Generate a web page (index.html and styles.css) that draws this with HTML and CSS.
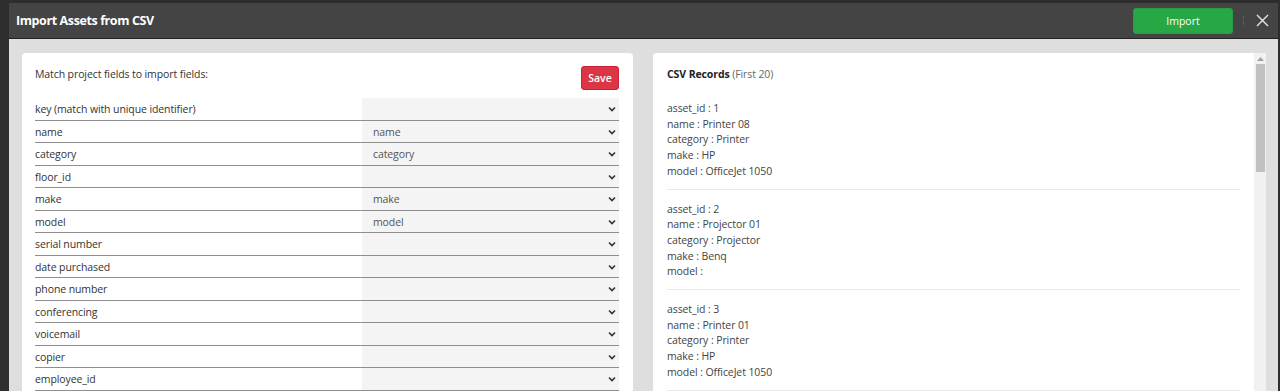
FILE: index.html
```html
<!DOCTYPE html>
<html>
<head>
<meta charset="utf-8">
<link rel="stylesheet" href="styles.css">
</head>
<body>
<div class="frame">
  <div class="modal">
    <header class="topbar">
      <h1 class="title">Import Assets from CSV</h1>
      <div class="actions">
        <button class="btn-import">Import</button>
        <span class="sep"></span>
        <svg class="close" width="13" height="13" viewBox="0 0 13 13"><path d="M1 1L12 12M12 1L1 12" stroke="#e8e8e8" stroke-width="1.4" fill="none"/></svg>
      </div>
    </header>
    <main class="body">
      <section class="card left">
        <div class="card-head">
          <span class="intro">Match project fields to import fields:</span>
          <button class="btn-save">Save</button>
        </div>
        <div class="rows">
          <div class="row"><span class="lbl">key (match with unique identifier)</span><span class="sel"><span></span><svg class="chev" width="8" height="6" viewBox="0 0 8 6"><path d="M1 1.5L4 4.5L7 1.5" stroke="#333" stroke-width="1.6" fill="none"/></svg></span></div>
          <div class="row"><span class="lbl">name</span><span class="sel"><span>name</span><svg class="chev" width="8" height="6" viewBox="0 0 8 6"><path d="M1 1.5L4 4.5L7 1.5" stroke="#333" stroke-width="1.6" fill="none"/></svg></span></div>
          <div class="row"><span class="lbl">category</span><span class="sel"><span>category</span><svg class="chev" width="8" height="6" viewBox="0 0 8 6"><path d="M1 1.5L4 4.5L7 1.5" stroke="#333" stroke-width="1.6" fill="none"/></svg></span></div>
          <div class="row"><span class="lbl">floor_id</span><span class="sel"><span></span><svg class="chev" width="8" height="6" viewBox="0 0 8 6"><path d="M1 1.5L4 4.5L7 1.5" stroke="#333" stroke-width="1.6" fill="none"/></svg></span></div>
          <div class="row"><span class="lbl">make</span><span class="sel"><span>make</span><svg class="chev" width="8" height="6" viewBox="0 0 8 6"><path d="M1 1.5L4 4.5L7 1.5" stroke="#333" stroke-width="1.6" fill="none"/></svg></span></div>
          <div class="row"><span class="lbl">model</span><span class="sel"><span>model</span><svg class="chev" width="8" height="6" viewBox="0 0 8 6"><path d="M1 1.5L4 4.5L7 1.5" stroke="#333" stroke-width="1.6" fill="none"/></svg></span></div>
          <div class="row"><span class="lbl">serial number</span><span class="sel"><span></span><svg class="chev" width="8" height="6" viewBox="0 0 8 6"><path d="M1 1.5L4 4.5L7 1.5" stroke="#333" stroke-width="1.6" fill="none"/></svg></span></div>
          <div class="row"><span class="lbl">date purchased</span><span class="sel"><span></span><svg class="chev" width="8" height="6" viewBox="0 0 8 6"><path d="M1 1.5L4 4.5L7 1.5" stroke="#333" stroke-width="1.6" fill="none"/></svg></span></div>
          <div class="row"><span class="lbl">phone number</span><span class="sel"><span></span><svg class="chev" width="8" height="6" viewBox="0 0 8 6"><path d="M1 1.5L4 4.5L7 1.5" stroke="#333" stroke-width="1.6" fill="none"/></svg></span></div>
          <div class="row"><span class="lbl">conferencing</span><span class="sel"><span></span><svg class="chev" width="8" height="6" viewBox="0 0 8 6"><path d="M1 1.5L4 4.5L7 1.5" stroke="#333" stroke-width="1.6" fill="none"/></svg></span></div>
          <div class="row"><span class="lbl">voicemail</span><span class="sel"><span></span><svg class="chev" width="8" height="6" viewBox="0 0 8 6"><path d="M1 1.5L4 4.5L7 1.5" stroke="#333" stroke-width="1.6" fill="none"/></svg></span></div>
          <div class="row"><span class="lbl">copier</span><span class="sel"><span></span><svg class="chev" width="8" height="6" viewBox="0 0 8 6"><path d="M1 1.5L4 4.5L7 1.5" stroke="#333" stroke-width="1.6" fill="none"/></svg></span></div>
          <div class="row"><span class="lbl">employee_id</span><span class="sel"><span></span><svg class="chev" width="8" height="6" viewBox="0 0 8 6"><path d="M1 1.5L4 4.5L7 1.5" stroke="#333" stroke-width="1.6" fill="none"/></svg></span></div>
        </div>
      </section>
      <section class="card right">
        <div class="records">
          <div class="rec-title"><b>CSV Records</b> <span class="muted">(First 20)</span></div>
          <div class="record">
            <div>asset_id : 1</div>
            <div>name : Printer 08</div>
            <div>category : Printer</div>
            <div>make : HP</div>
            <div>model : OfficeJet 1050</div>
          </div>
          <div class="record">
            <div>asset_id : 2</div>
            <div>name : Projector 01</div>
            <div>category : Projector</div>
            <div>make : Benq</div>
            <div>model :</div>
          </div>
          <div class="record">
            <div>asset_id : 3</div>
            <div>name : Printer 01</div>
            <div>category : Printer</div>
            <div>make : HP</div>
            <div>model : OfficeJet 1050</div>
          </div>
        </div>
        <div class="scrollbar">
          <svg class="arrow" width="7" height="4" viewBox="0 0 7 4"><path d="M0 4L3.5 0L7 4Z" fill="#a3a3a3"/></svg>
          <div class="thumb"></div>
        </div>
      </section>
    </main>
  </div>
</div>
</body>
</html>
```

FILE: styles.css
```css
* { box-sizing: border-box; }
html, body { margin: 0; padding: 0; }
body {
  width: 1280px;
  height: 391px;
  overflow: hidden;
  background: #2d2d2d;
  font-family: "Open Sans", "Noto Sans", sans-serif;
  font-size: 10.5px;
  letter-spacing: -0.1px;
  color: #333;
}
.frame {
  height: 391px;
  padding: 3px 2px 0 9px;
  display: flex;
}
.modal {
  flex: 1;
  display: flex;
  flex-direction: column;
  background: #dedede;
}
.topbar {
  height: 36px;
  background: #444444;
  border-bottom: 1px solid #222;
  display: flex;
  align-items: center;
  justify-content: space-between;
  padding: 0 9px 0 7px;
  flex: none;
}
.title {
  margin: 0;
  font-size: 12.5px;
  font-weight: 700;
  color: #fff;
  letter-spacing: -0.4px;
}
.actions {
  display: flex;
  align-items: center;
}
.btn-import {
  width: 100px;
  height: 26px;
  margin-top: 1px;
  background: #28a745;
  border: 1px solid #2a9c43;
  border-radius: 3px;
  color: #fff;
  font-family: inherit;
  font-size: 10.5px;
  padding: 0;
}
.sep {
  width: 1px;
  height: 10px;
  margin: 0 12px 0 10px;
  border-left: 1px dotted #666;
}
.close { display: block; }
.body {
  flex: 1;
  display: flex;
  gap: 20px;
  padding: 14px 12px 0 13px;
  min-height: 0;
}
.card {
  background: #fff;
  border-radius: 4px 4px 0 0;
}
.left {
  width: 611px;
  flex: none;
  padding: 13px 14px 0 13px;
}
.card-head {
  display: flex;
  justify-content: space-between;
  align-items: flex-start;
  height: 32px;
}
.intro { line-height: 16px; }
.btn-save {
  width: 38px;
  height: 24px;
  background: #dc3545;
  border: 1px solid #c82333;
  border-radius: 3px;
  color: #fff;
  font-family: inherit;
  font-size: 10.5px;
  font-weight: 600;
  padding: 0;
}
.rows { display: flex; flex-direction: column; }
.row {
  display: flex;
  height: 22.5px;
  border-bottom: 1px solid #8e8e8e;
}
.lbl {
  width: 327px;
  line-height: 21px;
  padding-top: 1px;
  white-space: nowrap;
}
.sel {
  flex: 1;
  background: #f4f4f4;
  display: flex;
  align-items: center;
  justify-content: space-between;
  padding: 1px 3px 0 11px;
  color: #555;
}
.chev { display: block; }
.right {
  flex: 1;
  display: flex;
  border-radius: 4px 0 0 0;
}
.records {
  flex: 1;
  padding: 13px 14px 0 14px;
  line-height: 15.7px;
  color: #444;
}
.rec-title { color: #222; margin-bottom: 7px; line-height: 16px; }
.rec-title b { font-weight: 700; }
.muted { color: #666; }
.record {
  padding: 12px 0 9px;
  border-bottom: 1px solid #e9e9e9;
}
.scrollbar {
  width: 12px;
  flex: none;
  background: #f1f1f1;
  position: relative;
  border-left: 1px solid #f1f1f1;
}
.arrow { position: absolute; left: 2px; top: 4px; }
.thumb {
  position: absolute;
  left: 1px;
  top: 11px;
  width: 9px;
  height: 108px;
  background: #c1c1c1;
}
```
